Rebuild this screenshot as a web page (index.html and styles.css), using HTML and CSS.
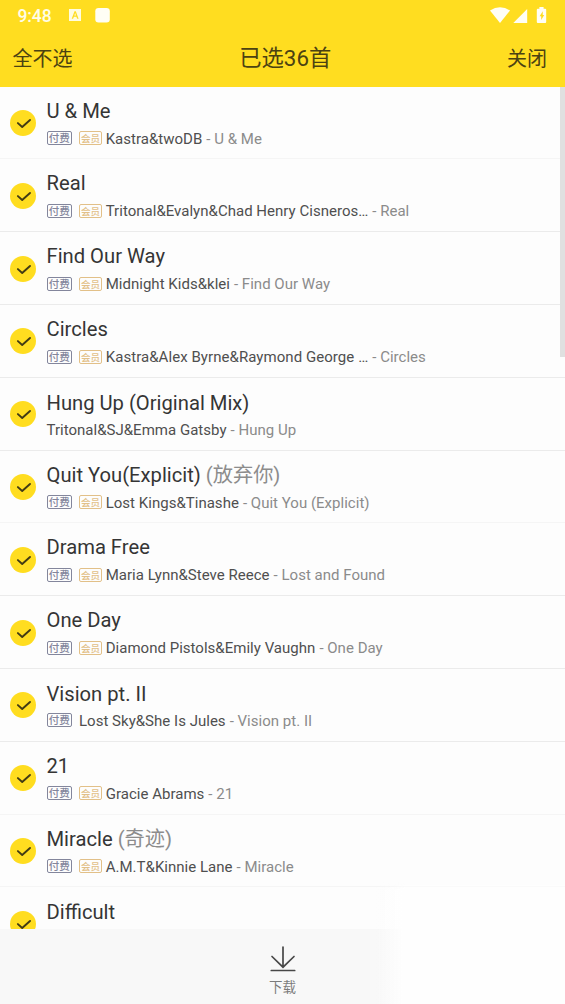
FILE: index.html
```html
<!DOCTYPE html>
<html lang="zh-CN">
<head>
<meta charset="utf-8">
<title>已选36首</title>
<link rel="stylesheet" href="styles.css">
</head>
<body>
<svg class="defs" width="0" height="0" aria-hidden="true">
  <symbol id="check" viewBox="0 0 26 26"><circle cx="13" cy="13" r="13" fill="#ffdd20"/><path d="M7.9 13.100 12.200 17 20 10" fill="none" stroke="#423b14" stroke-width="1.9" stroke-linecap="round" stroke-linejoin="round"/></symbol>
</svg>
<div class="app">
  <header class="header">
    <div class="status">
      <span class="time">9:48</span>
      <svg class="status-left" viewBox="0 0 42 15" width="42" height="15">
        <path fill="#fffce0" fill-rule="evenodd" d="M0 1h12v12H0zM2.7 10.8h1.4L4.9 8.7h2.5l.8 2.1h1.4L6.8 3.3H5.5zM5.3 7.5h1.7L6.15 5.1z"/>
        <rect x="26.300" y="0" width="14.500" height="14.500" rx="3.300" fill="#fffef5"/>
      </svg>
      <svg class="status-right" viewBox="0 0 58 17" width="58" height="17">
        <path fill="#fffef5" d="M0 3.4Q10 -3 20 3.4L10 16z"/>
        <path fill="#fffef5" d="M23.300 16H37.200V2z"/>
        <path fill="#fffef5" fill-rule="evenodd" d="M49.400 0h4.200v1.800h1.600q1 0 1 1V15q0 1-1 1h-7.400q-1 0-1-1V2.800q0-1 1-1h1.600zM52.800 4.300l-3.200 5h1.600V13l3-5h-1.500z"/>
      </svg>
    </div>
    <nav class="nav">
      <span class="nav-left">全不选</span>
      <h1 class="nav-title">已选36首</h1>
      <span class="nav-right">关闭</span>
    </nav>
  </header>
  <main class="list">
    <div class="row soft"><svg class="tick"><use href="#check"/></svg><div class="info"><div class="title">U &amp; Me</div><div class="meta"><span class="tag pay">付费</span><span class="tag vip">会员</span><span class="artist">Kastra&amp;twoDB</span><span class="album">- U &amp; Me</span></div></div></div>
    <div class="row"><svg class="tick"><use href="#check"/></svg><div class="info"><div class="title">Real</div><div class="meta"><span class="tag pay">付费</span><span class="tag vip">会员</span><span class="artist">Tritonal&amp;Evalyn&amp;Chad Henry Cisneros…</span><span class="album">- Real</span></div></div></div>
    <div class="row"><svg class="tick"><use href="#check"/></svg><div class="info"><div class="title">Find Our Way</div><div class="meta"><span class="tag pay">付费</span><span class="tag vip">会员</span><span class="artist">Midnight Kids&amp;klei</span><span class="album">- Find Our Way</span></div></div></div>
    <div class="row"><svg class="tick"><use href="#check"/></svg><div class="info"><div class="title">Circles</div><div class="meta"><span class="tag pay">付费</span><span class="tag vip">会员</span><span class="artist wide">Kastra&amp;Alex Byrne&amp;Raymond George …</span><span class="album">- Circles</span></div></div></div>
    <div class="row"><svg class="tick"><use href="#check"/></svg><div class="info low"><div class="title">Hung Up (Original Mix)</div><div class="meta"><span class="artist">Tritonal&amp;SJ&amp;Emma Gatsby</span><span class="album">- Hung Up</span></div></div></div>
    <div class="row soft"><svg class="tick"><use href="#check"/></svg><div class="info"><div class="title">Quit You(Explicit) <span class="alias">(放弃你)</span></div><div class="meta"><span class="tag pay">付费</span><span class="tag vip">会员</span><span class="artist">Lost Kings&amp;Tinashe</span><span class="album">- Quit You (Explicit)</span></div></div></div>
    <div class="row"><svg class="tick"><use href="#check"/></svg><div class="info"><div class="title">Drama Free</div><div class="meta"><span class="tag pay">付费</span><span class="tag vip">会员</span><span class="artist">Maria Lynn&amp;Steve Reece</span><span class="album">- Lost and Found</span></div></div></div>
    <div class="row"><svg class="tick"><use href="#check"/></svg><div class="info"><div class="title">One Day</div><div class="meta"><span class="tag pay">付费</span><span class="tag vip">会员</span><span class="artist">Diamond Pistols&amp;Emily Vaughn</span><span class="album">- One Day</span></div></div></div>
    <div class="row"><svg class="tick"><use href="#check"/></svg><div class="info low"><div class="title">Vision pt. II</div><div class="meta"><span class="tag pay">付费</span><span class="artist">Lost Sky&amp;She Is Jules</span><span class="album">- Vision pt. II</span></div></div></div>
    <div class="row soft"><svg class="tick"><use href="#check"/></svg><div class="info"><div class="title">21</div><div class="meta"><span class="tag pay">付费</span><span class="tag vip">会员</span><span class="artist">Gracie Abrams</span><span class="album">- 21</span></div></div></div>
    <div class="row soft"><svg class="tick"><use href="#check"/></svg><div class="info"><div class="title">Miracle <span class="alias">(奇迹)</span></div><div class="meta"><span class="tag pay">付费</span><span class="tag vip">会员</span><span class="artist">A.M.T&amp;Kinnie Lane</span><span class="album">- Miracle</span></div></div></div>
    <div class="row"><svg class="tick"><use href="#check"/></svg><div class="info low"><div class="title">Difficult</div></div></div>
    <div class="scrollbar"></div>
  </main>
  <footer class="footer">
    <svg class="download" viewBox="0 0 26 27" width="26" height="27"><path d="M13 1v20M2 10.500l11 10.700 11-10.700M1.300 24.500h23.400" fill="none" stroke="#484848" stroke-width="1.700" stroke-linecap="round"/></svg>
    <span class="download-label">下载</span>
  </footer>
  <div class="glow"></div>
</div>
</body>
</html>
```
FILE: styles.css
```css
* { box-sizing: border-box; }
body { margin: 0; font-family: Roboto, "Noto Sans CJK SC", sans-serif; background: #fdfdfd; }
.defs { display: none; }
.app { position: relative; width: 565px; height: 1004px; overflow: hidden; display: flex; flex-direction: column; background: #fdfdfd; }
.header { height: 86.7px; flex: none; background: #ffdd20; }
.status { height: 30px; display: flex; align-items: flex-start; padding: 7px 17px 0 17.500px; }
.time { width: 51px; font-size: 17.500px; line-height: 18px; font-weight: 500; color: #fffde8; letter-spacing: -0.1px; }
.status-left { margin-top: 1px; }
.status-right { margin-left: auto; }
.nav { height: 54px; display: grid; grid-template-columns: 1fr auto 1fr; align-items: center; padding: 0 18px 0 12.500px; font-size: 20px; color: #4b4212; }
.nav-title { margin: 0 0 2px; padding-left: 11px; font-size: 22.300px; font-weight: 400; }
.nav-left, .nav-right { padding-top: 1px; }
.nav-right { text-align: right; }
.list { position: relative; flex: none; height: 842.3px; overflow: hidden; }
.row { height: 72.8px; display: flex; border-bottom: 1px solid #ebebeb; }
.row.soft { border-bottom-color: #f5f5f5; }
.tick { width: 26px; height: 26px; flex: none; margin: 23.300px 10.500px 0 10px; }
.info { padding-top: 11px; }
.info.low { padding-top: 11.700px; }
.title { height: 26px; line-height: 26px; font-size: 20.200px; color: #353535; white-space: nowrap; }
.alias { color: #8c8c8c; }
.meta { height: 30px; display: flex; align-items: center; font-size: 15px; line-height: 30px; letter-spacing: 0.02px; white-space: nowrap; }
.low .meta { height: 28px; line-height: 28px; }
.tag { height: 14px; border: 1px solid; border-radius: 2px; line-height: 12px; text-align: center; font-family: "Noto Sans CJK SC", sans-serif; font-size: 10.500px; font-weight: 500; margin-top: -1px; }
.pay { width: 25.500px; margin-right: 7px; color: #83869c; }
.vip { width: 23px; margin-right: 3.700px; color: #e2c088; font-size: 9.500px; }
.artist { color: #4f4f4f; }
.artist.wide { letter-spacing: 0.06px; }
.album { margin-left: 4px; color: #8b8b8b; }
.scrollbar { position: absolute; top: 0; right: 0; width: 5px; height: 270px; background: #e0e0e0; }
.footer { flex: 1; display: flex; flex-direction: column; align-items: center; padding-top: 17px; background: #f8f8f8; }
.download-label { margin-top: 2px; font-size: 13.500px; line-height: 24px; color: #7c7c7c; }
.glow { position: absolute; right: 0; bottom: 0; width: 190px; height: 122px; background: linear-gradient(to right, rgba(255,255,255,0), #fefefe 30px); -webkit-mask-image: linear-gradient(to bottom, transparent, #000 8px); mask-image: linear-gradient(to bottom, transparent, #000 8px); }
```
